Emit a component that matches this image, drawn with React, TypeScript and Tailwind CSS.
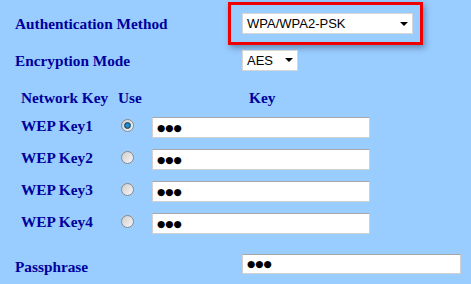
import React from 'react';

const label = "text-[15.3px] leading-[17px] font-bold text-[#00009c] [font-family:'Liberation_Serif',serif]";

function Select({ value, width }: { value: string; width: string }) {
  return (
    <div className={`${width} h-[21px] bg-white border border-[#d6d6d6] flex items-center pl-[4px] pr-[4px] justify-between`}>
      <span className="text-[13px] leading-none text-black [font-family:'Liberation_Sans',sans-serif]">{value}</span>
      <span className="w-0 h-0 border-l-[4px] border-r-[4px] border-t-[4px] border-l-transparent border-r-transparent border-t-black" />
    </div>
  );
}

function Dots() {
  return <span className="text-[9.5px] leading-none text-black [font-family:'DejaVu_Sans',sans-serif]">●●●</span>;
}

function Radio({ checked }: { checked?: boolean }) {
  return (
    <div className="w-[13px] h-[13px] rounded-full border border-[#8a8a8a] bg-gradient-to-br from-[#cfcfcf] to-[#f5f5f5] flex items-center justify-center">
      {checked && (
        <div className="w-[7px] h-[7px] rounded-full bg-[#2b8fd0] border border-[#1a4f7a] shadow-[inset_0_0_1px_#000]" />
      )}
    </div>
  );
}

function KeyField({ className }: { className: string }) {
  return (
    <div className={`${className} bg-white border border-[#d0d0d0] border-t-[#a6a6a6] flex items-center pl-[4px]`}>
      <Dots />
    </div>
  );
}

export default function App() {
  const keys = ['WEP Key1', 'WEP Key2', 'WEP Key3', 'WEP Key4'];

  return (
    <div className="w-[471px] h-[284px] bg-[#99ccff] pl-[15px] pt-[2px] overflow-hidden">
      {/* auth method */}
      <div className="flex items-center h-[43px]">
        <div className={`${label} w-[213px]`}>Authentication Method</div>
        <div className="w-[195px] h-[43px] border-[3px] border-[#ee0000] shadow-[2px_3px_6px_rgba(40,60,90,0.45)] flex items-center pl-[11px]">
          <Select value="WPA/WPA2-PSK" width="w-[171px]" />
        </div>
      </div>

      {/* encryption */}
      <div className="flex items-center h-[24px] mt-[3px]">
        <div className={`${label} w-[227px]`}>Encryption Mode</div>
        <Select value="AES" width="w-[56px]" />
      </div>

      {/* header */}
      <div className={`${label} flex mt-[17px] pl-[6px]`}>
        <span className="w-[97px]">Network Key</span>
        <span className="w-[131px]">Use</span>
        <span>Key</span>
      </div>

      <div className="flex flex-col gap-[11px] mt-[11px] pl-[6px]">
        {keys.map((k, i) => (
          <div key={k} className="flex items-start h-[21px]">
            <div className={`${label} leading-[14px] w-[100px]`}>{k}</div>
            <div className="w-[31px] pt-[2px]">
              <Radio checked={i === 0} />
            </div>
            <KeyField className="w-[218px] h-[21px]" />
          </div>
        ))}
      </div>

      {/* passphrase */}
      <div className="flex items-center h-[20px] mt-[20px]">
        <div className={`${label} w-[227px] pt-[4px]`}>Passphrase</div>
        <KeyField className="w-[219px] h-[20px]" />
      </div>
    </div>
  );
}
